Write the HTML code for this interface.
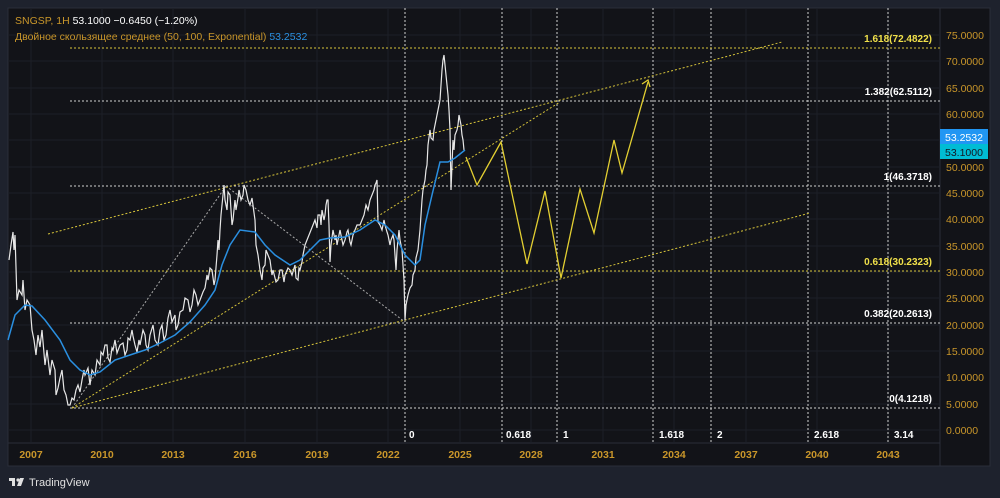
<!DOCTYPE html>
<html><head><meta charset="utf-8"><style>
body{margin:0;width:1000px;height:498px;background:#1e222d;overflow:hidden;font-family:"Liberation Sans","DejaVu Sans",sans-serif}
svg{position:absolute;left:0;top:0}
</style></head><body>
<svg width="1000" height="498" viewBox="0 0 1000 498">
<rect x="8" y="8" width="982" height="458" fill="#121318"/>
<rect x="8" y="8" width="982" height="458" fill="none" stroke="#2a2e39"/>
<line x1="940" y1="8" x2="940" y2="466" stroke="#2a2e39"/>
<line x1="8" y1="443" x2="940" y2="443" stroke="#2a2e39"/>
<g stroke="#1c1f27" stroke-width="1">
<line x1="8" y1="35" x2="940" y2="35"/><line x1="8" y1="61" x2="940" y2="61"/><line x1="8" y1="88" x2="940" y2="88"/><line x1="8" y1="114" x2="940" y2="114"/><line x1="8" y1="140" x2="940" y2="140"/><line x1="8" y1="167" x2="940" y2="167"/><line x1="8" y1="193" x2="940" y2="193"/><line x1="8" y1="219" x2="940" y2="219"/><line x1="8" y1="246" x2="940" y2="246"/><line x1="8" y1="272" x2="940" y2="272"/><line x1="8" y1="298" x2="940" y2="298"/><line x1="8" y1="325" x2="940" y2="325"/><line x1="8" y1="351" x2="940" y2="351"/><line x1="8" y1="377" x2="940" y2="377"/><line x1="8" y1="404" x2="940" y2="404"/><line x1="8" y1="430" x2="940" y2="430"/>
<line x1="31" y1="8" x2="31" y2="443"/><line x1="102" y1="8" x2="102" y2="443"/><line x1="173" y1="8" x2="173" y2="443"/><line x1="245" y1="8" x2="245" y2="443"/><line x1="317" y1="8" x2="317" y2="443"/><line x1="388" y1="8" x2="388" y2="443"/><line x1="460" y1="8" x2="460" y2="443"/><line x1="531" y1="8" x2="531" y2="443"/><line x1="603" y1="8" x2="603" y2="443"/><line x1="674" y1="8" x2="674" y2="443"/><line x1="746" y1="8" x2="746" y2="443"/><line x1="817" y1="8" x2="817" y2="443"/><line x1="888" y1="8" x2="888" y2="443"/>
</g>
<g stroke="#d0d0d0" stroke-dasharray="2,2" stroke-width="1">
<line x1="405" y1="8" x2="405" y2="443"/><line x1="502" y1="8" x2="502" y2="443"/><line x1="557" y1="8" x2="557" y2="443"/><line x1="653" y1="8" x2="653" y2="443"/><line x1="711" y1="8" x2="711" y2="443"/><line x1="808" y1="8" x2="808" y2="443"/><line x1="888" y1="8" x2="888" y2="443"/>
<line x1="70" y1="101" x2="940" y2="101"/><line x1="70" y1="186" x2="940" y2="186"/><line x1="70" y1="323" x2="940" y2="323"/><line x1="70" y1="408" x2="940" y2="408"/>
<line x1="72" y1="408" x2="226" y2="186" stroke="#aaa"/><line x1="226" y1="186" x2="405" y2="322" stroke="#aaa"/>
</g>
<g stroke="#d8c53a" stroke-dasharray="2,2" stroke-width="1">
<line x1="70" y1="48" x2="940" y2="48"/><line x1="70" y1="271" x2="940" y2="271"/>
<line x1="48" y1="234" x2="782" y2="42"/><line x1="72" y1="408" x2="810" y2="213"/><line x1="72" y1="408" x2="560" y2="102"/>
</g>
<polyline fill="none" stroke="#e8e8e8" stroke-width="1.2" points="9,260 11,245 13,232 14,250 15,235 17,300 19,290 22,295 23,280 25,310 27,300 30,305 32,330 34,340 36,355 38,335 40,347 42,330 45,365 47,350 50,375 52,360 55,370 56,395 58,388 60,378 62,370 64,390 66,395 68,405 70,405 72,398 74,400 76,390 78,385 80,392 82,380 84,370 85,375 88,368 90,385 92,370 95,375 97,360 100,365 101,352 103,355 105,345 107,345 108,358 110,362 112,348 113,350 115,340 117,353 120,345 123,343 125,355 127,350 128,338 130,340 132,330 133,336 135,345 137,352 139,340 140,345 143,330 145,335 146,345 148,350 150,335 153,325 155,340 158,345 160,330 162,325 164,340 166,335 168,318 170,310 172,322 175,315 176,330 178,325 180,312 183,310 185,298 188,300 190,312 192,305 194,290 196,295 198,305 200,300 203,292 205,288 207,275 208,280 210,268 212,270 214,285 215,280 217,255 218,240 219,250 220,230 221,215 222,205 223,195 224,185 225,200 227,210 228,192 230,195 232,225 233,220 235,200 236,210 238,198 239,190 241,200 243,195 244,185 246,190 248,200 250,205 252,198 255,220 256,245 258,255 260,270 262,280 263,268 265,265 266,250 268,255 270,260 272,275 273,270 276,282 278,280 280,270 282,270 284,282 285,275 288,268 290,270 292,275 295,265 296,278 298,280 299,268 300,270 302,262 303,255 305,245 307,240 309,235 311,230 313,225 315,220 317,228 318,215 320,215 321,225 322,210 324,220 325,215 326,205 327,200 328,200 329,225 330,262 331,245 333,230 335,240 336,235 337,245 338,240 340,230 341,235 343,245 345,240 347,232 348,230 350,242 351,245 353,235 355,230 357,225 360,225 362,220 364,215 366,205 368,210 370,200 372,195 374,190 375,185 376,183 377,180 378,222 380,225 382,230 384,220 385,225 387,232 388,235 390,245 391,240 393,235 394,240 395,255 396,270 397,250 399,230 400,240 402,250 403,265 404,280 405,320 406,305 408,295 410,288 412,285 413,275 415,270 416,258 418,250 419,240 420,230 421,215 422,200 423,190 425,180 426,170 427,165 428,145 430,130 431,138 433,140 434,130 435,125 436,120 437,115 438,110 440,100 441,85 442,70 443,60 444,55 445,65 446,75 447,85 448,95 449,110 450,130 451,190 452,165 453,140 454,150 455,135 457,130 458,125 459,115 460,120 461,125 462,135 463,140 464,150"/>
<polyline fill="none" stroke="#2a8fe0" stroke-width="1.5" points="8,340 15,315 25,305 32,306 45,320 60,340 70,360 80,370 90,375 100,372 115,360 130,355 145,350 160,343 175,335 190,322 205,305 215,290 222,265 230,245 240,230 255,232 265,245 275,255 290,265 300,260 310,250 320,240 330,238 345,237 360,230 375,220 385,225 395,235 405,255 415,265 420,260 425,225 432,195 440,162 448,162 455,158 465,150"/>
<polyline fill="none" stroke="#e3cf32" stroke-width="1.3" points="466,157 477,185 501,142 527,264 545,191 561,278 580,189 594,233 614,140 622,173 648,82"/>
<polyline fill="none" stroke="#e3cf32" stroke-width="1.3" points="642,84 648,80 650,87"/>
<g font-size="10" fill="#ffffff" font-weight="bold" text-anchor="end">
<text x="932" y="42" fill="#f0e04a">1.618(72.4822)</text>
<text x="932" y="95">1.382(62.5112)</text>
<text x="932" y="180">1(46.3718)</text>
<text x="932" y="265" fill="#f0e04a">0.618(30.2323)</text>
<text x="932" y="317">0.382(20.2613)</text>
<text x="932" y="402">0(4.1218)</text>
</g>
<g font-size="10" fill="#ffffff" font-weight="bold">
<text x="409" y="438">0</text><text x="506" y="438">0.618</text><text x="563" y="438">1</text><text x="659" y="438">1.618</text><text x="717" y="438">2</text><text x="814" y="438">2.618</text><text x="894" y="438">3.14</text>
</g>
<g font-size="10.5" fill="#c9962a" font-weight="bold" text-anchor="middle">
<text x="31" y="458">2007</text><text x="102" y="458">2010</text><text x="173" y="458">2013</text><text x="245" y="458">2016</text><text x="317" y="458">2019</text><text x="388" y="458">2022</text><text x="460" y="458">2025</text><text x="531" y="458">2028</text><text x="603" y="458">2031</text><text x="674" y="458">2034</text><text x="746" y="458">2037</text><text x="817" y="458">2040</text><text x="888" y="458">2043</text>
</g>
<g font-size="10.5" fill="#c9962a">
<text x="946" y="39">75.0000</text><text x="946" y="65">70.0000</text><text x="946" y="92">65.0000</text><text x="946" y="118">60.0000</text><text x="946" y="171">50.0000</text><text x="946" y="197">45.0000</text><text x="946" y="223">40.0000</text><text x="946" y="250">35.0000</text><text x="946" y="276">30.0000</text><text x="946" y="302">25.0000</text><text x="946" y="329">20.0000</text><text x="946" y="355">15.0000</text><text x="946" y="381">10.0000</text><text x="946" y="408">5.0000</text><text x="946" y="434">0.0000</text>
</g>
<rect x="940" y="129" width="48" height="15" fill="#2196f3"/>
<rect x="940" y="144" width="48" height="15" fill="#00bcd4"/>
<text x="945" y="141" font-size="10.5" fill="#fff">53.2532</text>
<text x="945" y="156" font-size="10.5" fill="#131722">53.1000</text>
<text x="15" y="24" font-size="10.5" fill="#c9962a">SNGSP, 1H <tspan fill="#fff">53.1000  −0.6450 (−1.20%)</tspan></text>
<text x="15" y="40" font-size="10.5" fill="#c9962a">Двойное скользящее среднее (50, 100, Exponential) <tspan fill="#2a8fe0">53.2532</tspan></text>
<g fill="#e0e0e0"><rect x="9" y="478" width="6" height="3"/><rect x="12" y="478" width="3" height="8"/><circle cx="18" cy="480" r="1.6"/><polygon points="20,478 24,478 21,486 17,486"/></g>
<text x="29" y="486" font-size="11" fill="#e0e0e0">TradingView</text>
</svg>
</body></html>
